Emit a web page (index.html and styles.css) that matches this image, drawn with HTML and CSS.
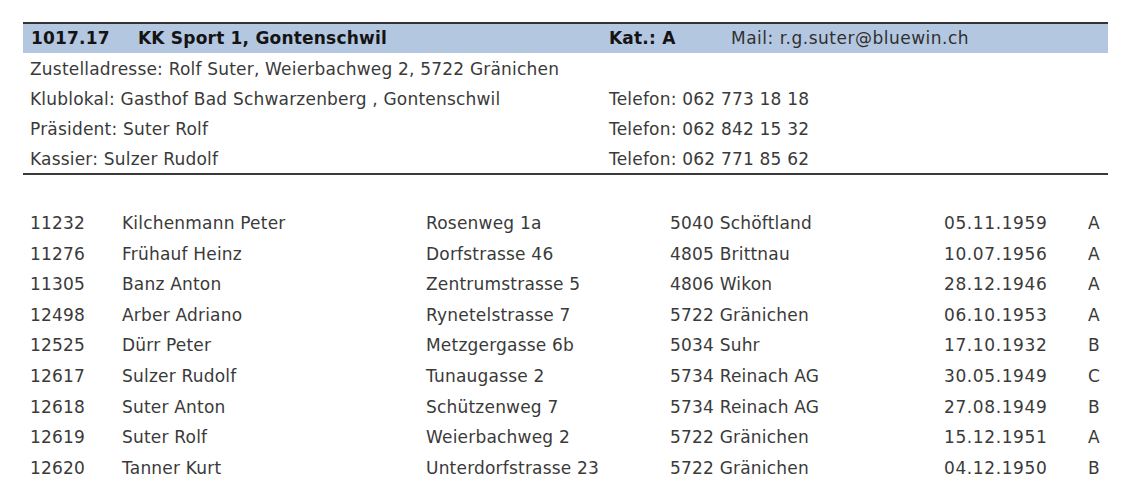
FILE: index.html
```html
<!DOCTYPE html>
<html lang="de">
<head>
<meta charset="utf-8">
<title>KK Sport 1, Gontenschwil</title>
<link rel="stylesheet" href="styles.css">
</head>
<body>
<div class="page">
  <div class="club-head">
    <span class="b">1017.17</span>
    <span class="b">KK Sport 1, Gontenschwil</span>
    <span class="b">Kat.: A</span>
    <span class="mail">Mail: r.g.suter@bluewin.ch</span>
  </div>
  <div class="info">
    <div class="info-row"><span>Zustelladresse: Rolf Suter, Weierbachweg 2, 5722 Gränichen</span><span></span></div>
    <div class="info-row"><span>Klublokal: Gasthof Bad Schwarzenberg , Gontenschwil</span><span>Telefon: 062 773 18 18</span></div>
    <div class="info-row"><span>Präsident: Suter Rolf</span><span>Telefon: 062 842 15 32</span></div>
    <div class="info-row"><span>Kassier: Sulzer Rudolf</span><span>Telefon: 062 771 85 62</span></div>
  </div>
  <div class="members">
    <div class="m-row"><span>11232</span><span>Kilchenmann Peter</span><span>Rosenweg 1a</span><span>5040 Schöftland</span><span class="date">05.11.1959</span><span>A</span></div>
    <div class="m-row"><span>11276</span><span>Frühauf Heinz</span><span>Dorfstrasse 46</span><span>4805 Brittnau</span><span class="date">10.07.1956</span><span>A</span></div>
    <div class="m-row"><span>11305</span><span>Banz Anton</span><span>Zentrumstrasse 5</span><span>4806 Wikon</span><span class="date">28.12.1946</span><span>A</span></div>
    <div class="m-row"><span>12498</span><span>Arber Adriano</span><span>Rynetelstrasse 7</span><span>5722 Gränichen</span><span class="date">06.10.1953</span><span>A</span></div>
    <div class="m-row"><span>12525</span><span>Dürr Peter</span><span>Metzgergasse 6b</span><span>5034 Suhr</span><span class="date">17.10.1932</span><span>B</span></div>
    <div class="m-row"><span>12617</span><span>Sulzer Rudolf</span><span>Tunaugasse 2</span><span>5734 Reinach AG</span><span class="date">30.05.1949</span><span>C</span></div>
    <div class="m-row"><span>12618</span><span>Suter Anton</span><span>Schützenweg 7</span><span>5734 Reinach AG</span><span class="date">27.08.1949</span><span>B</span></div>
    <div class="m-row"><span>12619</span><span>Suter Rolf</span><span>Weierbachweg 2</span><span>5722 Gränichen</span><span class="date">15.12.1951</span><span>A</span></div>
    <div class="m-row"><span>12620</span><span>Tanner Kurt</span><span>Unterdorfstrasse 23</span><span>5722 Gränichen</span><span class="date">04.12.1950</span><span>B</span></div>
  </div>
</div>
</body>
</html>
```
FILE: styles.css
```css
html, body {
  margin: 0;
  padding: 0;
  background: #ffffff;
}
body {
  font-family: "DejaVu Sans", "Open Sans", sans-serif;
  font-size: 17px;
  letter-spacing: 0.2px;
  color: #3a3a3a;
}
.page {
  margin: 22px 0 0 23px;
  width: 1085px;
}
.club-head {
  display: grid;
  grid-template-columns: 107px 471px 122px 1fr;
  border-top: 2px solid #333333;
  background: #b4c7e1;
  height: 29px;
  line-height: 29px;
  padding-left: 8px;
  color: #303030;
  white-space: nowrap;
}
.club-head .b {
  font-weight: 700;
  color: #141414;
}
.club-head .mail {
  letter-spacing: 0.5px;
}
.info {
  border-bottom: 2px solid #3a3a3a;
}
.info-row {
  display: grid;
  grid-template-columns: 579px 1fr;
  height: 30px;
  line-height: 32px;
  padding-left: 7px;
  white-space: nowrap;
}
.members {
  padding-top: 33px;
}
.m-row {
  display: grid;
  grid-template-columns: 92px 304px 244px 274px 144px 1fr;
  height: 30.6px;
  line-height: 30.6px;
  padding-left: 7px;
  white-space: nowrap;
}
.m-row .date {
  letter-spacing: 0.6px;
}
```
